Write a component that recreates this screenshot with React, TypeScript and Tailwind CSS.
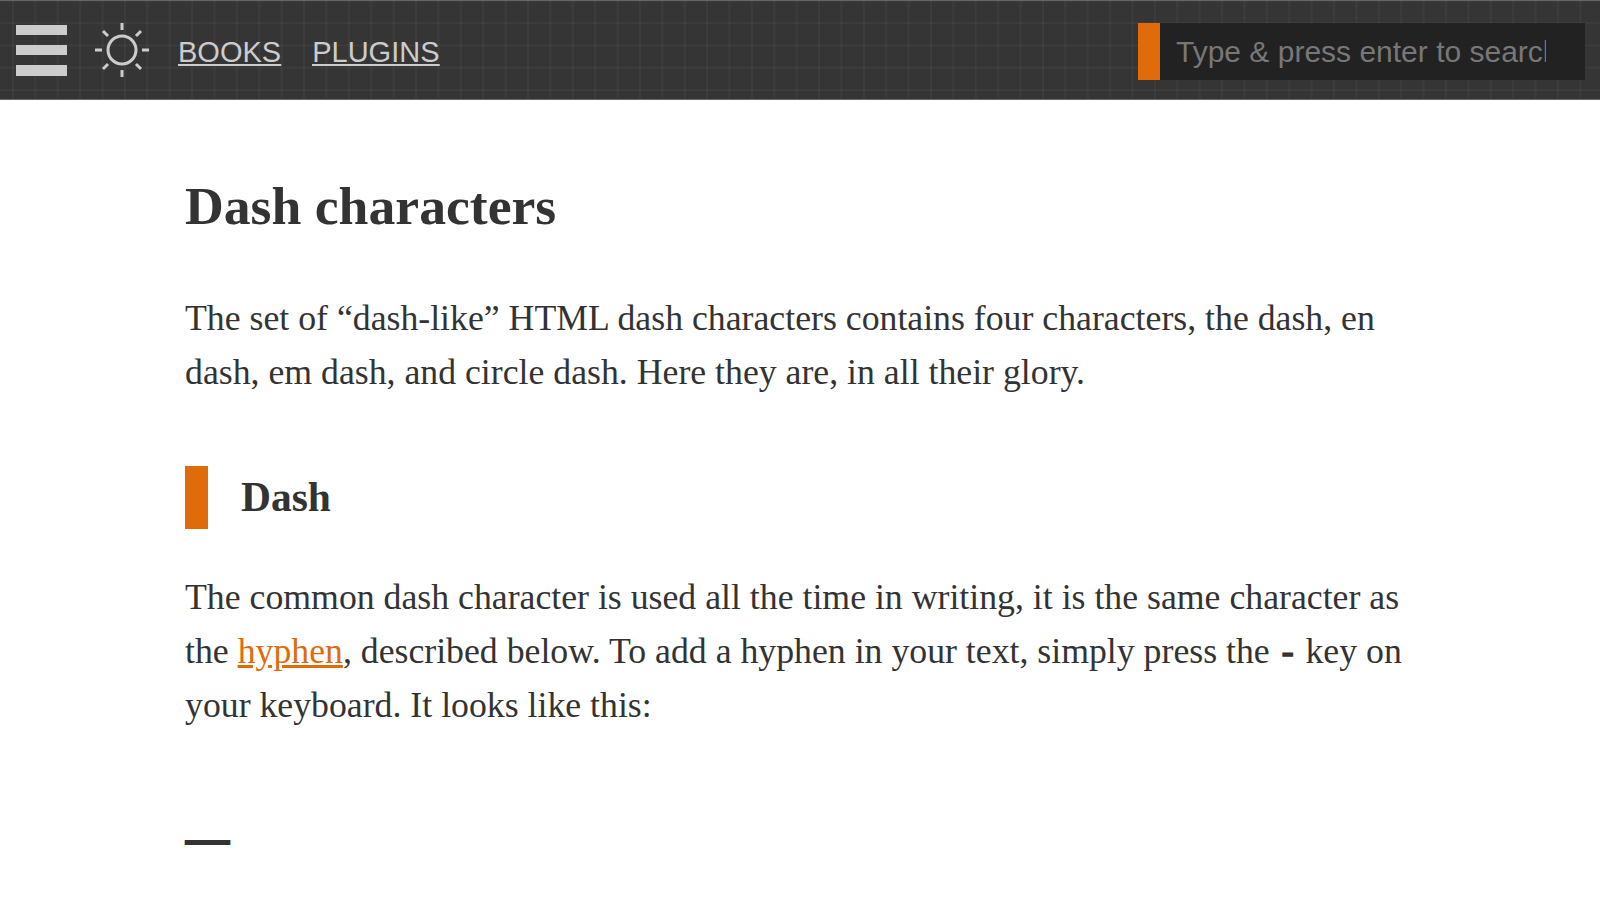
import type { ReactNode } from 'react';

function MenuIcon() {
  return (
    <div className="flex flex-col gap-[10px] w-[51px] shrink-0 mt-[1px]">
      <span className="block h-[10px] bg-[#cccccc]"></span>
      <span className="block h-[10px] bg-[#cccccc]"></span>
      <span className="block h-[11px] bg-[#cccccc]"></span>
    </div>
  );
}

function SunIcon() {
  return (
    <svg width="56" height="56" viewBox="0 0 56 56" fill="none" stroke="#cccccc" strokeWidth="3" className="shrink-0">
      <circle cx="28" cy="28" r="14" />
      <path d="M28 1v7M28 48v7M1 28h7M48 28h7M9 9l5 5M47 9l-5 5M9 47l5-5M47 47l-5-5" />
    </svg>
  );
}

function Para({ children }: { children: ReactNode }) {
  return <p className="text-[35.75px] leading-[54px] text-[#333333]">{children}</p>;
}

export default function App() {
  return (
    <div className="min-h-[922px] bg-white font-['Liberation_Serif',serif]">
      {/* Header */}
      <header className="h-[100px] flex items-center justify-between pl-4 pr-[15px] border-y border-[#666666] bg-[#353535] bg-[linear-gradient(rgba(255,255,255,0.035)_2px,transparent_2px),linear-gradient(90deg,rgba(255,255,255,0.035)_2px,transparent_2px)] bg-[size:22.4px_22.4px] bg-[position:12px_21px] font-['Liberation_Sans',sans-serif]">
        <div className="flex items-center">
          <MenuIcon />
          <div className="ml-[27px]"><SunIcon /></div>
          <nav className="ml-[28px] mt-[6px] flex gap-[31px] text-[29px] text-[#cccccc] underline">
            <a href="#">BOOKS</a>
            <a href="#">PLUGINS</a>
          </nav>
        </div>
        <div className="flex h-[57px] w-[447px] mt-[3px]">
          <span className="w-[22px] shrink-0 bg-[#e06b0b]"></span>
          <div className="flex-1 min-w-0 bg-[#222222] pl-[16px] pr-[39px] flex items-center">
            <span className="block min-w-0 text-[30px] text-[#777777] whitespace-nowrap overflow-hidden">Type &amp; press enter to search</span>
          </div>
        </div>
      </header>

      {/* Article */}
      <main className="pl-[185px] pr-[185px]">
        <h1 className="mt-[76px] text-[53.7px] leading-[60px] font-bold text-[#333333]">Dash characters</h1>
        <div className="mt-[55px]">
          <Para>The set of “dash-like” HTML dash characters contains four characters, the dash, en dash, em dash, and circle dash. Here they are, in all their glory.</Para>
        </div>
        <h2 className="mt-[67px] h-[63px] flex items-center text-[41.5px] font-bold text-[#333333] border-l-[23px] border-[#e06b0b] pl-[33px]">Dash</h2>
        <div className="mt-[41px]">
          <Para>
            The common dash character is used all the time in writing, it is the same character as the{' '}
            <a href="#" className="text-[#e06b0b] underline">hyphen</a>, described below. To add a hyphen in your text, simply press the <strong className="mx-[3px] font-normal [-webkit-text-stroke:1.5px_#333333]">-</strong> key on your keyboard. It looks like this:
          </Para>
        </div>
        <p className="mt-[79px] ml-[1px] text-[43px] leading-[54px] font-bold text-[#333333] [-webkit-text-stroke:2px_#333333]">—</p>
      </main>
    </div>
  );
}
